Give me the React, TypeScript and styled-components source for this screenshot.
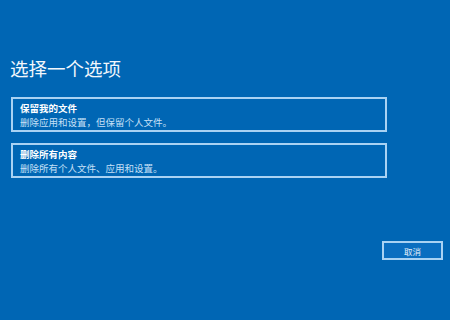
import React from 'react';
import styled, { createGlobalStyle } from 'styled-components';

const GlobalStyle = createGlobalStyle`
  html, body {
    margin: 0;
    padding: 0;
    background: #0066b4;
  }
  body {
    font-family: "Noto Sans CJK SC", "Noto Sans", sans-serif;
  }
`;

const Screen = styled.div`
  width: 450px;
  height: 320px;
  box-sizing: border-box;
  background: #0066b4;
  padding: 55px 0 0 11px;
  display: flex;
  flex-direction: column;
  overflow: hidden;
`;

const Title = styled.h1`
  margin: 0 0 16px -1px;
  font-size: 18.5px;
  line-height: 26px;
  font-weight: 400;
  color: #f2f7fc;
`;

const OptionList = styled.div`
  display: flex;
  flex-direction: column;
  gap: 11px;
  width: 376px;
`;

const Option = styled.button`
  box-sizing: border-box;
  height: 35px;
  border: 2px solid #a9d2f3;
  background: transparent;
  padding: 3px 0 0 7px;
  text-align: left;
  display: flex;
  flex-direction: column;
  font-family: inherit;
  cursor: pointer;
`;

const OptionTitle = styled.span`
  font-size: 9.5px;
  line-height: 13px;
  font-weight: 700;
  color: #ffffff;
`;

const OptionDesc = styled.span`
  font-size: 9.5px;
  line-height: 14px;
  color: #c6e0f7;
`;

const Footer = styled.div`
  display: flex;
  justify-content: flex-end;
  padding: 63px 7px 0 0;
`;

const CancelButton = styled.button`
  box-sizing: border-box;
  width: 61px;
  height: 19px;
  border: 2px solid #a9d2f3;
  background: #0a6ec0;
  color: #e4f0fb;
  font-family: inherit;
  font-size: 8.5px;
  line-height: 14px;
  padding: 0;
`;

const options = [
  { title: '保留我的文件', desc: '删除应用和设置，但保留个人文件。' },
  { title: '删除所有内容', desc: '删除所有个人文件、应用和设置。' },
];

const App: React.FC = () => {
  return (
    <>
      <GlobalStyle />
      <Screen>
        <Title>选择一个选项</Title>
        <OptionList>
          {options.map((o) => (
            <Option key={o.title}>
              <OptionTitle>{o.title}</OptionTitle>
              <OptionDesc>{o.desc}</OptionDesc>
            </Option>
          ))}
        </OptionList>
        <Footer>
          <CancelButton>取消</CancelButton>
        </Footer>
      </Screen>
    </>
  );
};

export default App;
